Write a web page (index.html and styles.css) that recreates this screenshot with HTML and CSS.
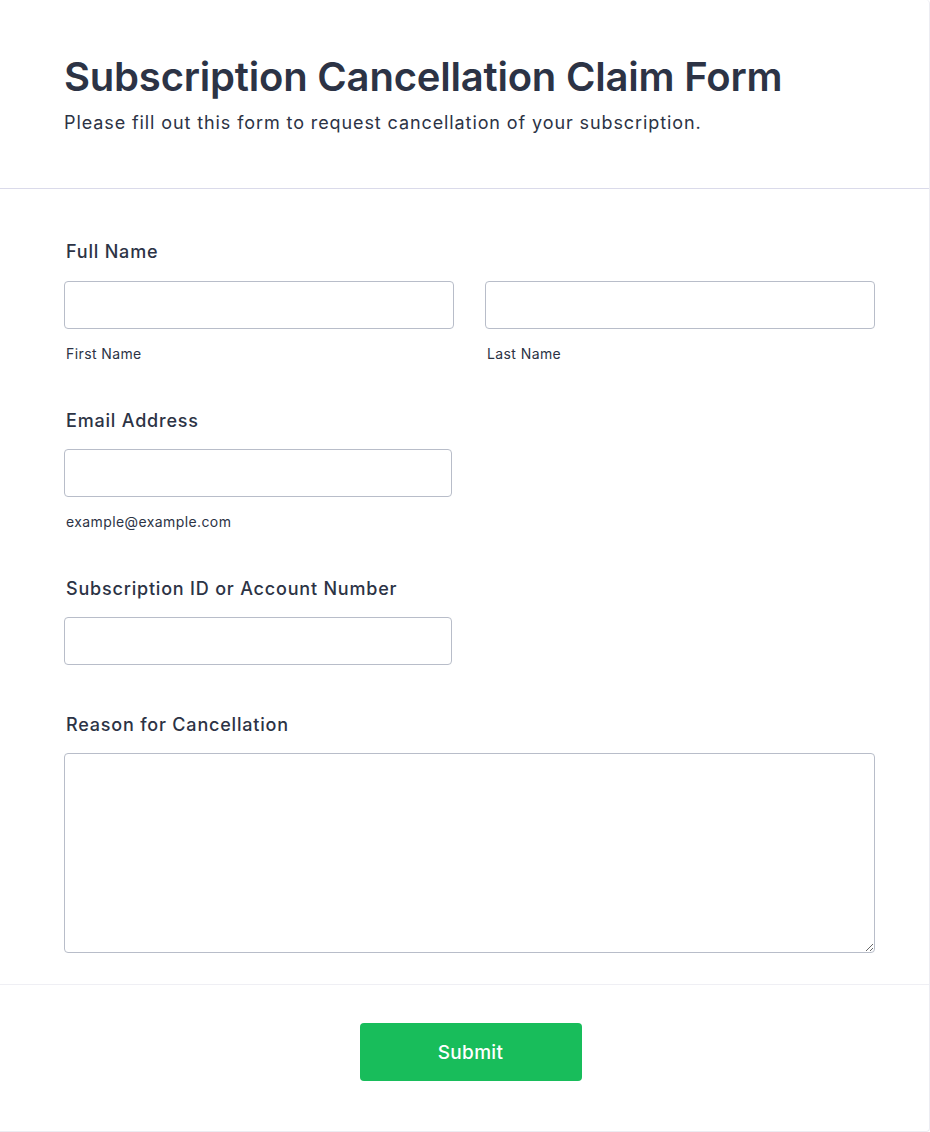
FILE: index.html
```html
<!DOCTYPE html>
<html lang="en">
<head>
<meta charset="utf-8">
<title>Subscription Cancellation Claim Form</title>
<link rel="stylesheet" href="styles.css">
</head>
<body>
<div class="card">
  <header class="header">
    <h1 class="title">Subscription Cancellation Claim Form</h1>
    <p class="subtitle">Please fill out this form to request cancellation of your subscription.</p>
  </header>
  <form class="form">
    <div class="field first">
      <label class="label">Full Name</label>
      <div class="row">
        <div class="col">
          <input class="input" type="text">
          <span class="sublabel">First Name</span>
        </div>
        <div class="col">
          <input class="input" type="text">
          <span class="sublabel">Last Name</span>
        </div>
      </div>
    </div>
    <div class="field">
      <label class="label">Email Address</label>
      <div class="col half">
        <input class="input" type="email">
        <span class="sublabel">example@example.com</span>
      </div>
    </div>
    <div class="field plain">
      <label class="label">Subscription ID or Account Number</label>
      <div class="col half">
        <input class="input" type="text">
      </div>
    </div>
    <div class="field last">
      <label class="label">Reason for Cancellation</label>
      <textarea class="textarea"></textarea>
    </div>
  </form>
  <div class="footer">
    <button class="submit" type="button">Submit</button>
  </div>
</div>
</body>
</html>
```
FILE: styles.css
```css
* { box-sizing: border-box; }
html, body { margin: 0; padding: 0; background: #ffffff; }
body {
  font-family: Inter, "Noto Sans", "Liberation Sans", sans-serif;
  color: #2c3345;
}
.card {
  width: 930px;
  min-height: 1132px;
  background: #ffffff;
  border-right: 1px solid #ececf2;
  border-bottom: 1px solid #ececf2;
  border-radius: 0 4px 4px 0;
}
.header {
  padding: 53px 64px 53px 64px;
  border-bottom: 1px solid #dadaea;
}
.title {
  margin: 0;
  font-size: 40px;
  line-height: 48px;
  font-weight: 600;
  letter-spacing: -0.2px;
}
.subtitle {
  margin: 10px 0 0 0;
  font-size: 18px;
  line-height: 24px;
  font-weight: 400;
  letter-spacing: 0.9px;
}
.form {
  padding: 51px 54px 31px 64px;
  display: flex;
  flex-direction: column;
  gap: 45px;
  border-bottom: 1px solid #efeff4;
}
.field { display: flex; flex-direction: column; }
.field.plain { margin-bottom: 3px; }
.label {
  font-size: 18px;
  line-height: 24px;
  font-weight: 500;
  letter-spacing: 0.8px;
  padding-left: 2px;
  margin-bottom: 16px;
}
.field.first .label { margin-bottom: 17px; }
.row { display: flex; gap: 31px; }
.col { display: flex; flex-direction: column; flex: 1; }
.col.half { flex: none; width: 388px; }
.input {
  width: 100%;
  height: 48px;
  border: 1px solid #b8bdc9;
  border-radius: 4px;
  background: #fff;
  font: inherit;
}
.sublabel {
  margin-top: 15px;
  font-size: 14px;
  line-height: 20px;
  letter-spacing: 0.4px;
  padding-left: 2px;
}
.textarea {
  width: 100%;
  height: 200px;
  border: 1px solid #b8bdc9;
  border-radius: 4px;
  background: #fff;
  font: inherit;
  display: block;
}
.footer {
  display: flex;
  justify-content: center;
  padding: 38px 0 50px 12px;
}
.submit {
  width: 222px;
  height: 58px;
  border: none;
  border-radius: 4px;
  background: #18bd5b;
  color: #ffffff;
  font-family: Inter, "Noto Sans", sans-serif;
  font-size: 19px;
  font-weight: 500;
  letter-spacing: 0.3px;
}
```
